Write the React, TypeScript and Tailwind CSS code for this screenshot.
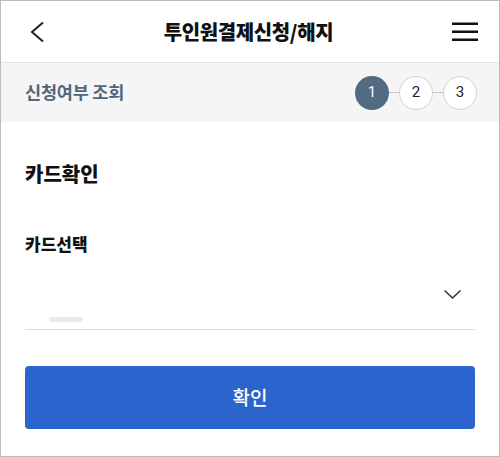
export default function App() {
  return (
    <div className="w-[500px] h-[457px] border border-[#bdbdbd] bg-white overflow-hidden font-['Noto_Sans_CJK_KR',sans-serif]">
      <header className="h-[62px] border-b border-[#e3e3e3] flex items-center justify-between pl-[28px] pr-[21px]">
        <svg width="16" height="22" viewBox="0 0 16 22" fill="none" stroke="#222" strokeWidth={2}>
          <path d="M14 1.5L3 11l11 9.5" />
        </svg>
        <h1 className="text-[20px] font-extrabold text-[#111] tracking-[-0.4px]">투인원결제신청/해지</h1>
        <svg width="26" height="20" viewBox="0 0 26 20" fill="#111">
          <rect x="0" y="0.5" width="26" height="2.5" />
          <rect x="0" y="8.5" width="26" height="2.5" />
          <rect x="0" y="16.5" width="26" height="2.5" />
        </svg>
      </header>

      <div className="h-[59px] bg-[#f5f5f5] flex items-center justify-between pl-[24px] pr-[22px]">
        <span className="text-[17.5px] font-bold text-[#4f667d] tracking-[-0.2px]">신청여부 조회</span>
        <div className="flex items-center">
          <span className="w-[34px] h-[34px] rounded-full bg-[#536b82] text-white text-[15px] flex items-center justify-center font-['Roboto',sans-serif]">1</span>
          <span className="w-[10px] h-px bg-[#c8c8c8]" />
          <span className="w-[34px] h-[34px] rounded-full bg-white border border-[#d0d0d0] text-[#222] text-[15px] flex items-center justify-center font-['Roboto',sans-serif]">2</span>
          <span className="w-[10px] h-px bg-[#c8c8c8]" />
          <span className="w-[34px] h-[34px] rounded-full bg-white border border-[#d0d0d0] text-[#222] text-[15px] flex items-center justify-center font-['Roboto',sans-serif]">3</span>
        </div>
      </div>

      <main className="px-[24px]">
        <h2 className="mt-[38px] text-[20px] leading-[28px] font-extrabold text-[#111]">카드확인</h2>
        <p className="mt-[44px] text-[17px] leading-[24px] font-extrabold text-[#111]">카드선택</p>

        <div className="border-b border-[#dcdcdc] pt-[34px] pb-[7px]">
          <div className="flex justify-end pr-[14px]">
            <svg width="17" height="9" viewBox="0 0 17 9" fill="none" stroke="#333" strokeWidth={1.5}>
              <path d="M0.5 0.5l8 7.5 8-7.5" />
            </svg>
          </div>
          <div className="mt-[18px] ml-[24px] w-[34px] h-[5px] rounded-full bg-[#e9ebef]" />
        </div>

        <button className="mt-[36px] w-full h-[63px] rounded-[4px] bg-[#2a64cc] text-white text-[19px] font-medium flex items-center justify-center">
          확인
        </button>
      </main>
    </div>
  );
}
